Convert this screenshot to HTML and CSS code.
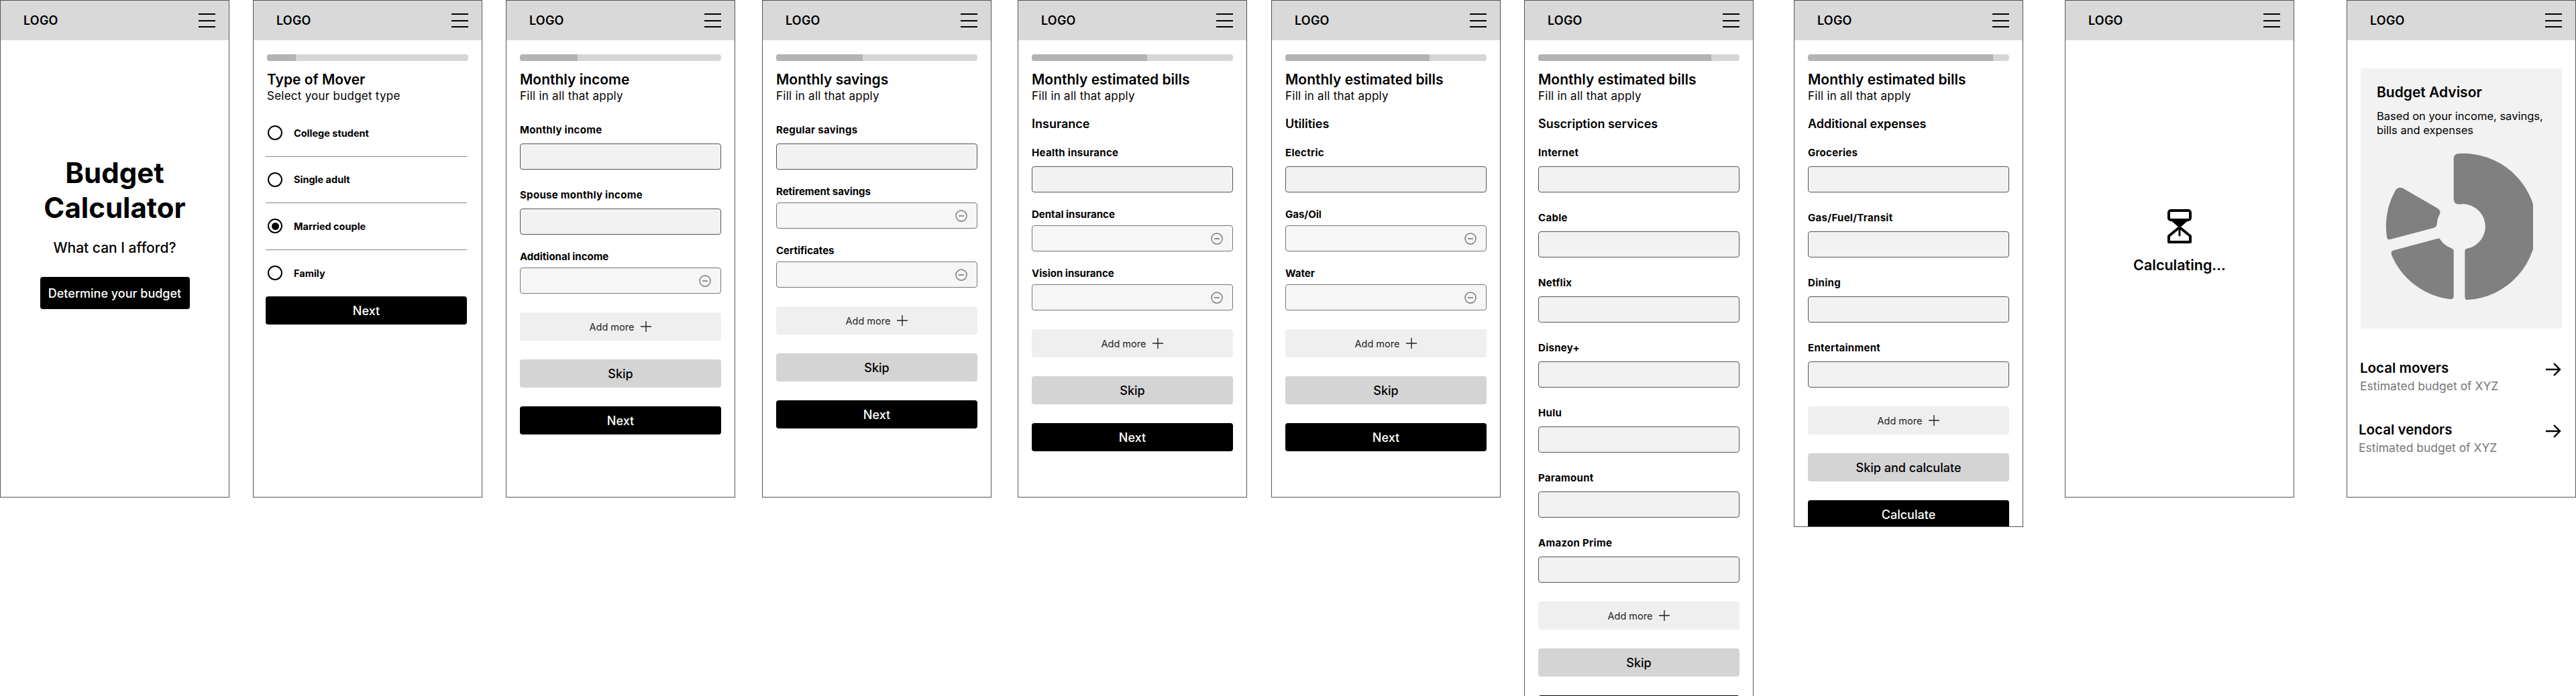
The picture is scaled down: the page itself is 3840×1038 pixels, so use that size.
FILE: index.html
```html
<!DOCTYPE html>
<html lang="en">
<head>
  <meta charset="UTF-8">
  <title>Budget Calculator wireframes</title>
  <link rel="stylesheet" href="styles.css">
</head>
<body>
  <svg class="defs" width="0" height="0" aria-hidden="true">
    <symbol id="minus" viewBox="0 0 18 18">
      <circle cx="9" cy="9" r="8" fill="none" stroke="#777" stroke-width="1.4"/>
      <path d="M5 9h8" stroke="#777" stroke-width="1.6"/>
    </symbol>
    <symbol id="plus" viewBox="0 0 16 16">
      <path d="M8 0v16M0 8h16" stroke="#222" stroke-width="1.4"/>
    </symbol>
    <symbol id="arrow" viewBox="0 0 24 20">
      <path d="M1 10h21M13 1l9 9-9 9" fill="none" stroke="#000" stroke-width="2.4"/>
    </symbol>
  </svg>

  <!-- Landing -->
  <div class="screen">
    <header class="topbar"><span class="logo">LOGO</span><span class="burger"><i></i><i></i><i></i></span></header>
    <div class="landing">
      <h1>Budget<br>Calculator</h1>
      <p class="tagline">What can I afford?</p>
      <button class="btn btn-start">Determine your budget</button>
    </div>
  </div>

  <!-- Type of mover -->
  <div class="screen gap-35">
    <header class="topbar"><span class="logo">LOGO</span><span class="burger"><i></i><i></i><i></i></span></header>
    <div class="body">
      <div class="progress"><div class="progress-fill" style="width:43px"></div></div>
      <h2>Type of Mover</h2>
      <p class="sub">Select your budget type</p>
      <div class="radio-list">
        <div class="radio-row"><span class="radio"></span>College student</div>
        <div class="radio-row"><span class="radio"></span>Single adult</div>
        <div class="radio-row"><span class="radio checked"></span>Married couple</div>
        <div class="radio-row"><span class="radio"></span>Family</div>
        <button class="btn btn-next">Next</button>
      </div>
    </div>
  </div>

  <!-- Monthly income -->
  <div class="screen gap-35">
    <header class="topbar"><span class="logo">LOGO</span><span class="burger"><i></i><i></i><i></i></span></header>
    <div class="body">
      <div class="progress"><div class="progress-fill" style="width:86px"></div></div>
      <h2>Monthly income</h2>
      <p class="sub">Fill in all that apply</p>
      <div class="fields">
        <div class="field"><label class="wide">Monthly income</label><div class="input"></div></div>
        <div class="field"><label class="wide">Spouse monthly income</label><div class="input"></div></div>
        <div class="field short"><label>Additional income</label><div class="input removable"><svg class="minus"><use href="#minus"/></svg></div></div>
      </div>
      <div class="actions">
        <button class="btn btn-add">Add more <svg class="plus"><use href="#plus"/></svg></button>
        <button class="btn btn-skip">Skip</button>
        <button class="btn btn-next">Next</button>
      </div>
    </div>
  </div>

  <!-- Monthly savings -->
  <div class="screen gap-40">
    <header class="topbar"><span class="logo">LOGO</span><span class="burger"><i></i><i></i><i></i></span></header>
    <div class="body">
      <div class="progress"><div class="progress-fill" style="width:129px"></div></div>
      <h2>Monthly savings</h2>
      <p class="sub">Fill in all that apply</p>
      <div class="fields">
        <div class="field"><label class="wide">Regular savings</label><div class="input"></div></div>
        <div class="field short"><label>Retirement savings</label><div class="input removable"><svg class="minus"><use href="#minus"/></svg></div></div>
        <div class="field short"><label>Certificates</label><div class="input removable"><svg class="minus"><use href="#minus"/></svg></div></div>
      </div>
      <div class="actions">
        <button class="btn btn-add">Add more <svg class="plus"><use href="#plus"/></svg></button>
        <button class="btn btn-skip">Skip</button>
        <button class="btn btn-next">Next</button>
      </div>
    </div>
  </div>

  <!-- Bills: insurance -->
  <div class="screen gap-39">
    <header class="topbar"><span class="logo">LOGO</span><span class="burger"><i></i><i></i><i></i></span></header>
    <div class="body">
      <div class="progress"><div class="progress-fill" style="width:172px"></div></div>
      <h2>Monthly estimated bills</h2>
      <p class="sub">Fill in all that apply</p>
      <h3>Insurance</h3>
      <div class="fields">
        <div class="field"><label class="wide">Health insurance</label><div class="input"></div></div>
        <div class="field short"><label>Dental insurance</label><div class="input removable"><svg class="minus"><use href="#minus"/></svg></div></div>
        <div class="field short"><label>Vision insurance</label><div class="input removable"><svg class="minus"><use href="#minus"/></svg></div></div>
      </div>
      <div class="actions">
        <button class="btn btn-add">Add more <svg class="plus"><use href="#plus"/></svg></button>
        <button class="btn btn-skip">Skip</button>
        <button class="btn btn-next">Next</button>
      </div>
    </div>
  </div>

  <!-- Bills: utilities -->
  <div class="screen gap-36">
    <header class="topbar"><span class="logo">LOGO</span><span class="burger"><i></i><i></i><i></i></span></header>
    <div class="body">
      <div class="progress"><div class="progress-fill" style="width:215px"></div></div>
      <h2>Monthly estimated bills</h2>
      <p class="sub">Fill in all that apply</p>
      <h3>Utilities</h3>
      <div class="fields">
        <div class="field"><label class="wide">Electric</label><div class="input"></div></div>
        <div class="field short"><label>Gas/Oil</label><div class="input removable"><svg class="minus"><use href="#minus"/></svg></div></div>
        <div class="field short"><label>Water</label><div class="input removable"><svg class="minus"><use href="#minus"/></svg></div></div>
      </div>
      <div class="actions">
        <button class="btn btn-add">Add more <svg class="plus"><use href="#plus"/></svg></button>
        <button class="btn btn-skip">Skip</button>
        <button class="btn btn-next">Next</button>
      </div>
    </div>
  </div>

  <!-- Bills: subscriptions, runs past the fold -->
  <div class="screen screen-long gap-35">
    <header class="topbar"><span class="logo">LOGO</span><span class="burger"><i></i><i></i><i></i></span></header>
    <div class="body">
      <div class="progress"><div class="progress-fill" style="width:258px"></div></div>
      <h2>Monthly estimated bills</h2>
      <p class="sub">Fill in all that apply</p>
      <h3>Suscription services</h3>
      <div class="fields">
        <div class="field"><label class="wide">Internet</label><div class="input"></div></div>
        <div class="field"><label class="wide">Cable</label><div class="input"></div></div>
        <div class="field"><label class="wide">Netflix</label><div class="input"></div></div>
        <div class="field"><label class="wide">Disney+</label><div class="input"></div></div>
        <div class="field"><label class="wide">Hulu</label><div class="input"></div></div>
        <div class="field"><label class="wide">Paramount</label><div class="input"></div></div>
        <div class="field"><label class="wide">Amazon Prime</label><div class="input"></div></div>
      </div>
      <div class="actions">
        <button class="btn btn-add">Add more <svg class="plus"><use href="#plus"/></svg></button>
        <button class="btn btn-skip">Skip</button>
        <button class="btn btn-next">Next</button>
      </div>
    </div>
  </div>

  <!-- Bills: additional expenses -->
  <div class="screen screen-mid gap-60">
    <header class="topbar"><span class="logo">LOGO</span><span class="burger"><i></i><i></i><i></i></span></header>
    <div class="body">
      <div class="progress"><div class="progress-fill" style="width:276px"></div></div>
      <h2>Monthly estimated bills</h2>
      <p class="sub">Fill in all that apply</p>
      <h3>Additional expenses</h3>
      <div class="fields">
        <div class="field"><label class="wide">Groceries</label><div class="input"></div></div>
        <div class="field"><label class="wide">Gas/Fuel/Transit</label><div class="input"></div></div>
        <div class="field"><label class="wide">Dining</label><div class="input"></div></div>
        <div class="field"><label class="wide">Entertainment</label><div class="input"></div></div>
      </div>
      <div class="actions">
        <button class="btn btn-add">Add more <svg class="plus"><use href="#plus"/></svg></button>
        <button class="btn btn-skip">Skip and calculate</button>
        <button class="btn btn-next">Calculate</button>
      </div>
    </div>
  </div>

  <!-- Calculating -->
  <div class="screen gap-62">
    <header class="topbar"><span class="logo">LOGO</span><span class="burger"><i></i><i></i><i></i></span></header>
    <div class="loading">
      <svg class="hourglass" viewBox="0 0 36 53">
        <rect x="2" y="2" width="32" height="14" rx="3" fill="none" stroke="#000" stroke-width="4"/>
        <path d="M3 15h30L18 28z" fill="#000"/>
        <path d="M18 27L2 40v9h32v-9z" fill="none" stroke="#000" stroke-width="4" stroke-linejoin="round"/>
        <path d="M18 26v13" stroke="#000" stroke-width="3" stroke-linecap="round"/>
      </svg>
      <p class="loading-text">Calculating...</p>
    </div>
  </div>

  <!-- Results -->
  <div class="screen gap-78">
    <header class="topbar"><span class="logo">LOGO</span><span class="burger"><i></i><i></i><i></i></span></header>
    <div class="results">
      <div class="advisor">
        <h4>Budget Advisor</h4>
        <p>Based on your income, savings,<br>bills and expenses</p>
        <svg class="chart" viewBox="0 0 220 220">
          <path d="M101.67 9Q101.67 1 110 1A109 109 0 0 1 122 219.3Q118.33 219.5 118.33 214L118.33 146Q118.33 144 120.5 143A33.3 33.3 0 0 0 110 76.7Q101.67 76.7 101.67 68.7Z"/>
          <path d="M101.67 146L101.67 214Q101.67 218.5 96 218.2A109 109 0 0 1 9 152Q7.5 147 11.5 145.5L78 127.7Q80 127 81.5 129A34 34 0 0 0 99 142.5Q101.67 143.5 101.67 146Z"/>
          <path d="M2 125A109 109 0 0 1 14.5 56.5Q18.5 50 25.5 52.5L77 82.3Q83 86 81 91A34 34 0 0 0 76.8 105.5Q76.5 110 72.5 111.7L7 129Q2.3 130 2 125Z"/>
        </svg>
      </div>
      <div class="link-row">
        <div><div class="link-title">Local movers</div><div class="link-sub">Estimated budget of XYZ</div></div>
        <svg class="arrow"><use href="#arrow"/></svg>
      </div>
      <div class="link-row link-row-second">
        <div><div class="link-title">Local vendors</div><div class="link-sub">Estimated budget of XYZ</div></div>
        <svg class="arrow"><use href="#arrow"/></svg>
      </div>
    </div>
  </div>
</body>
</html>
```

FILE: styles.css
```css
* { margin: 0; padding: 0; box-sizing: border-box; font-family: 'Inter', 'Liberation Sans', sans-serif; }

body {
  display: flex;
  align-items: flex-start;
  width: 3840px;
  height: 1038px;
  overflow: hidden;
  background: white;
  color: black;
}

.defs { position: absolute; }

.screen {
  flex: none;
  width: 342px;
  height: 742px;
  border: 1px solid #555;
  background: white;
}
.screen-long { height: 1200px; }
.screen-mid { height: 786px; overflow: hidden; }

.gap-35 { margin-left: 35px; }
.gap-36 { margin-left: 36px; }
.gap-39 { margin-left: 39px; }
.gap-40 { margin-left: 40px; }
.gap-60 { margin-left: 60px; }
.gap-62 { margin-left: 62px; }
.gap-78 { margin-left: 78px; }

.topbar {
  display: flex;
  justify-content: space-between;
  align-items: center;
  height: 59px;
  padding: 0 20px 0 34px;
  background: #d9d9d9;
}
.logo { font-size: 18px; font-weight: 600; letter-spacing: 0.2px; }
.burger { display: flex; flex-direction: column; gap: 7.5px; width: 25px; }
.burger i { display: block; height: 2px; background: black; }

.body { padding: 21px 20px 0; }

.progress { height: 10px; border-radius: 4px; background: #d6d6d6; overflow: hidden; }
.progress-fill { height: 100%; background: #b3b3b3; }

h2 { margin-top: 16px; font-size: 21px; font-weight: 600; line-height: 24px; }
.sub { font-size: 17px; line-height: 25px; letter-spacing: 0.25px; }
h3 { margin-top: 16px; font-size: 18px; font-weight: 600; line-height: 25px; }

/* landing */
.landing { display: flex; flex-direction: column; align-items: center; padding-top: 172px; }
h1 { font-size: 42px; font-weight: 700; line-height: 52px; text-align: center; }
.tagline { margin-top: 22px; font-size: 21px; font-weight: 500; line-height: 24px; }

/* buttons */
.btn {
  display: flex;
  justify-content: center;
  align-items: center;
  width: 300px;
  height: 42px;
  border: none;
  border-radius: 4px;
  font-size: 18px;
  font-weight: 500;
}
.btn-start { width: 223px; height: 48px; margin-top: 31px; background: black; color: white; }
.btn-next { background: black; color: white; }
.btn-skip { background: #d4d4d4; color: black; }
.btn-add { gap: 10px; background: #efefef; color: #222; font-size: 14.5px; font-weight: 400; }
.plus { width: 16px; height: 16px; }

/* radios */
.radio-list { width: 300px; margin: 8px 0 0 -2px; }
.radio-row {
  display: flex;
  align-items: center;
  gap: 17px;
  height: 69.5px;
  padding-left: 3px;
  border-bottom: 1px solid #888;
  font-size: 14.5px;
  font-weight: 700;
}
.radio-list .radio-row:nth-child(4) { border-bottom: none; }
.radio {
  display: flex;
  justify-content: center;
  align-items: center;
  width: 22px;
  height: 22px;
  border: 2px solid black;
  border-radius: 50%;
}
.radio.checked::after { content: ""; width: 11px; height: 11px; border-radius: 50%; background: black; }

/* form fields */
.fields { margin-top: 28px; }
h3 + .fields { margin-top: 21px; }
.field { margin-top: 28px; }
.field.short { margin-top: 23px; }
.field:first-child { margin-top: 0; }
.field label { display: block; height: 20px; margin-bottom: 10px; font-size: 15px; font-weight: 700; line-height: 20px; }
.field label.wide { letter-spacing: 0.3px; }
.field.short label { margin-bottom: 6px; }
.input { height: 39px; border: 1px solid #555; border-radius: 4px; background: #f2f2f2; }
.input.removable {
  display: flex;
  justify-content: flex-end;
  align-items: center;
  padding-right: 14px;
  border-color: #777;
  background: #f6f6f6;
}
.minus { width: 18px; height: 18px; }

.actions { display: flex; flex-direction: column; gap: 28px; margin-top: 28px; }

/* calculating */
.loading { display: flex; flex-direction: column; align-items: center; padding-top: 252px; }
.hourglass { width: 36px; height: 53px; }
.loading-text { margin-top: 18px; font-size: 21.5px; font-weight: 600; line-height: 24px; }

/* results */
.results { padding: 42px 20px 0; }
.advisor { height: 388px; padding: 24px 0 0 24px; background: #f2f2f2; }
h4 { font-size: 21px; font-weight: 600; line-height: 24px; }
.advisor p { margin-top: 13px; font-size: 16.5px; line-height: 21px; }
.chart { display: block; width: 220px; height: 220px; margin: 23px 0 0 13px; fill: #808080; }

.link-row { display: flex; justify-content: space-between; align-items: flex-start; margin: 47px 0 0 -1px; }
.link-row-second { margin: 41px 0 0 -3px; }
.link-title { font-size: 20.5px; font-weight: 600; line-height: 24px; }
.link-sub { margin-top: 3px; font-size: 17.5px; line-height: 24px; color: #777; }
.arrow { width: 24px; height: 20px; margin: 4px 1px 0 0; }
```
